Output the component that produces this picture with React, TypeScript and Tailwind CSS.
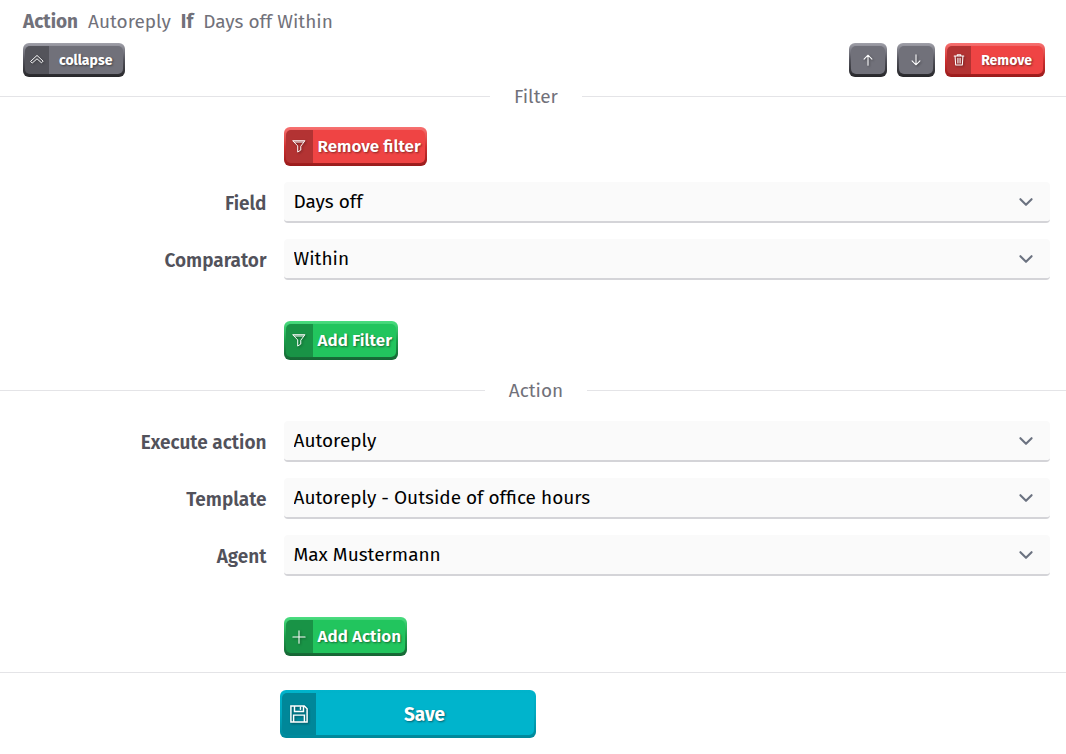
import { useState } from "react";
import type { ReactNode } from "react";
import { clsx } from "clsx";

type Tone = "gray" | "red" | "green" | "cyan";

const frames: Record<Tone, string> = {
    gray: "from-[#a1a1aa] via-[#52525b] to-[#27272a]",
    red: "from-[#f87171] via-[#cf3030] to-[#991b1b]",
    green: "from-[#4ade80] via-[#1a9d4a] to-[#166534]",
    cyan: "from-[#00b4cc] via-[#00a8be] to-[#008799]",
};

const faces: Record<Tone, string> = {
    gray: "bg-[#71717a]",
    red: "bg-[#ef4444]",
    green: "bg-[#22c55e]",
    cyan: "bg-[#00b4cc]",
};

function Svg({ size = 14, children }: { size?: number; children: ReactNode }) {
    return (
        <svg
            width={size}
            height={size}
            viewBox="0 0 16 16"
            fill="none"
            stroke="currentColor"
            strokeLinejoin="round"
            strokeLinecap="round"
            aria-hidden="true"
            className="shrink-0 drop-shadow-[1px_1px_1px_rgba(0,0,0,0.4)]"
        >
            {children}
        </svg>
    );
}

const CollapseIcon = () => (
    <Svg>
        <path d="M1 9.3 8 2.8l7 6.500-1.900 1.900L8 6.600l-5.100 4.600z" strokeWidth="1.1" />
    </Svg>
);

const UpIcon = () => (
    <Svg>
        <path d="M8 14V2.5M3.5 7 8 2.5 12.5 7" strokeWidth="1.2" />
    </Svg>
);

const DownIcon = () => (
    <Svg>
        <path d="M8 2v11.5M3.5 9 8 13.5 12.5 9" strokeWidth="1.2" />
    </Svg>
);

const TrashIcon = () => (
    <Svg>
        <path d="M2.5 3.5h11M6 3.5V2h4v1.5M3.5 3.5l.7 10.2h7.6l.7-10.2" strokeWidth="1.2" />
        <path d="M6.5 6v5.5M8 6v5.5M9.5 6v5.5" strokeWidth="0.9" />
    </Svg>
);

const FunnelIcon = () => (
    <Svg>
        <path d="M1.2.8h13.600L10 7.2v4.300L6.500 13.800V7.200zM2.800 2.300h10.400" strokeWidth="1.1" />
    </Svg>
);

const PlusIcon = () => (
    <Svg>
        <path d="M8 1v14M1 8h14" strokeWidth="1.2" />
    </Svg>
);

const SaveIcon = () => (
    <Svg size={18}>
        <path
            d="M.8.8h11.9l2.5 2.5v11.9H.8zM4 .8v5h8v-5M9.3 2.2v1.6M3.2 15.2V9h9.6v6.2"
            strokeWidth="1.3"
            strokeLinejoin="miter"
        />
    </Svg>
);

type ButtonProps = {
    tone: Tone;
    size?: "sm" | "md" | "lg";
    icon: ReactNode;
    label: string;
    iconOnly?: boolean;
    onClick?: () => void;
};

function RaisedButton({ tone, size = "md", icon, label, iconOnly, onClick }: ButtonProps) {
    return (
        <button
            type="button"
            onClick={onClick}
            aria-label={iconOnly ? label : undefined}
            className={clsx(
                "inline-flex rounded-md bg-linear-to-b px-[2px] py-[3px] text-white",
                frames[tone],
                size === "sm" && "h-[34px] text-sm font-bold",
                size === "md" && "h-[39px] text-[17px] font-semibold",
                size === "lg" && "h-12 w-64 text-[19px] font-bold",
            )}
        >
            <span className={clsx("flex h-full flex-1 overflow-hidden rounded-[5px]", faces[tone])}>
                <span
                    className={clsx(
                        "flex h-full items-center justify-center",
                        !iconOnly && "bg-black/25",
                        iconOnly && "w-[34px]",
                        !iconOnly && size === "sm" && "w-6",
                        size === "md" && "w-[27px]",
                        size === "lg" && "w-[34px]",
                    )}
                >
                    {icon}
                </span>
                {!iconOnly && (
                    <span
                        className={clsx(
                            "flex flex-1 items-center justify-center whitespace-nowrap [text-shadow:1px_1px_2px_rgba(0,0,0,0.45)]",
                            size === "sm" && "pl-2.5 pr-[11px] pt-0.5",
                            size === "md" && "pl-[5px] pr-1",
                            size === "lg" && "pt-0.5",
                        )}
                    >
                        {label}
                    </span>
                )}
            </span>
        </button>
    );
}

function Divider({ title }: { title: string }) {
    return (
        <div className="-mr-1.5 flex h-6 items-center gap-6 text-[19px] text-[#71717a]">
            <span className="h-px flex-1 bg-zinc-200" />
            <h2 className="pt-0.5">{title}</h2>
            <span className="h-px flex-1 bg-zinc-200" />
        </div>
    );
}

function SelectRow({ id, label, options }: { id: string; label: string; options: string[] }) {
    const [value, setValue] = useState(options[0]);

    return (
        <div className="flex items-center">
            <label htmlFor={id} className="w-1/4 pt-[3px] text-right text-[19px] font-semibold text-[#52525b]">
                {label}
            </label>
            <div className="relative ml-[17px] mr-4 flex-1">
                <select
                    id={id}
                    value={value}
                    onChange={(e) => setValue(e.target.value)}
                    className="block h-[41px] w-full appearance-none rounded-sm border-b-2 border-zinc-300 bg-zinc-50 pl-2.5 pr-10 pt-0.5 text-[19px] text-black"
                >
                    {options.map((option) => (
                        <option key={option}>{option}</option>
                    ))}
                </select>
                <svg
                    viewBox="0 0 20 20"
                    fill="none"
                    stroke="currentColor"
                    strokeWidth="1.5"
                    strokeLinecap="round"
                    strokeLinejoin="round"
                    aria-hidden="true"
                    className="pointer-events-none absolute right-2.5 top-1.5 size-7 text-[#6b7280]"
                >
                    <path d="m6 8 4 4 4-4" />
                </svg>
            </div>
        </div>
    );
}

function ButtonRow({ children }: { children: ReactNode }) {
    return (
        <div className="flex">
            <div className="w-1/4" />
            <div className="ml-[17px] flex">{children}</div>
        </div>
    );
}

export default function App() {
    return (
        <main className="overflow-x-clip bg-white pb-4 pt-2.5 font-['Fira_Sans','Noto_Sans',sans-serif]">
            <header className="pl-[23px] pr-[21px]">
                <p className="flex gap-2.5 text-[19px] leading-6 text-[#71717a]">
                    <b>Action</b>
                    <span>Autoreply</span>
                    <b>If</b>
                    <span>Days off Within</span>
                </p>
                <div className="mt-[9px] flex justify-between">
                    <RaisedButton tone="gray" size="sm" icon={<CollapseIcon />} label="collapse" />
                    <div className="flex gap-2.5">
                        <RaisedButton tone="gray" size="sm" icon={<UpIcon />} label="Move up" iconOnly />
                        <RaisedButton tone="gray" size="sm" icon={<DownIcon />} label="Move down" iconOnly />
                        <RaisedButton tone="red" size="sm" icon={<TrashIcon />} label="Remove" />
                    </div>
                </div>
            </header>

            <section className="mt-[7px]">
                <Divider title="Filter" />
                <div className="mt-[19px] flex flex-col gap-4">
                    <ButtonRow>
                        <RaisedButton tone="red" icon={<FunnelIcon />} label="Remove filter" />
                    </ButtonRow>
                    <SelectRow id="field" label="Field" options={["Days off"]} />
                    <SelectRow id="comparator" label="Comparator" options={["Within"]} />
                </div>
                <div className="mt-[41px]">
                    <ButtonRow>
                        <RaisedButton tone="green" icon={<FunnelIcon />} label="Add Filter" />
                    </ButtonRow>
                </div>
            </section>

            <section className="mt-[18px]">
                <Divider title="Action" />
                <div className="mt-[19px] flex flex-col gap-4">
                    <SelectRow id="action" label="Execute action" options={["Autoreply"]} />
                    <SelectRow id="template" label="Template" options={["Autoreply - Outside of office hours"]} />
                    <SelectRow id="agent" label="Agent" options={["Max Mustermann"]} />
                </div>
                <div className="mt-[41px]">
                    <ButtonRow>
                        <RaisedButton tone="green" icon={<PlusIcon />} label="Add Action" />
                    </ButtonRow>
                </div>
            </section>

            <footer className="mt-4 flex border-t border-zinc-200 pt-[17px]">
                <div className="w-1/4" />
                <div className="ml-[13px] flex">
                    <RaisedButton tone="cyan" size="lg" icon={<SaveIcon />} label="Save" />
                </div>
            </footer>
        </main>
    );
}
